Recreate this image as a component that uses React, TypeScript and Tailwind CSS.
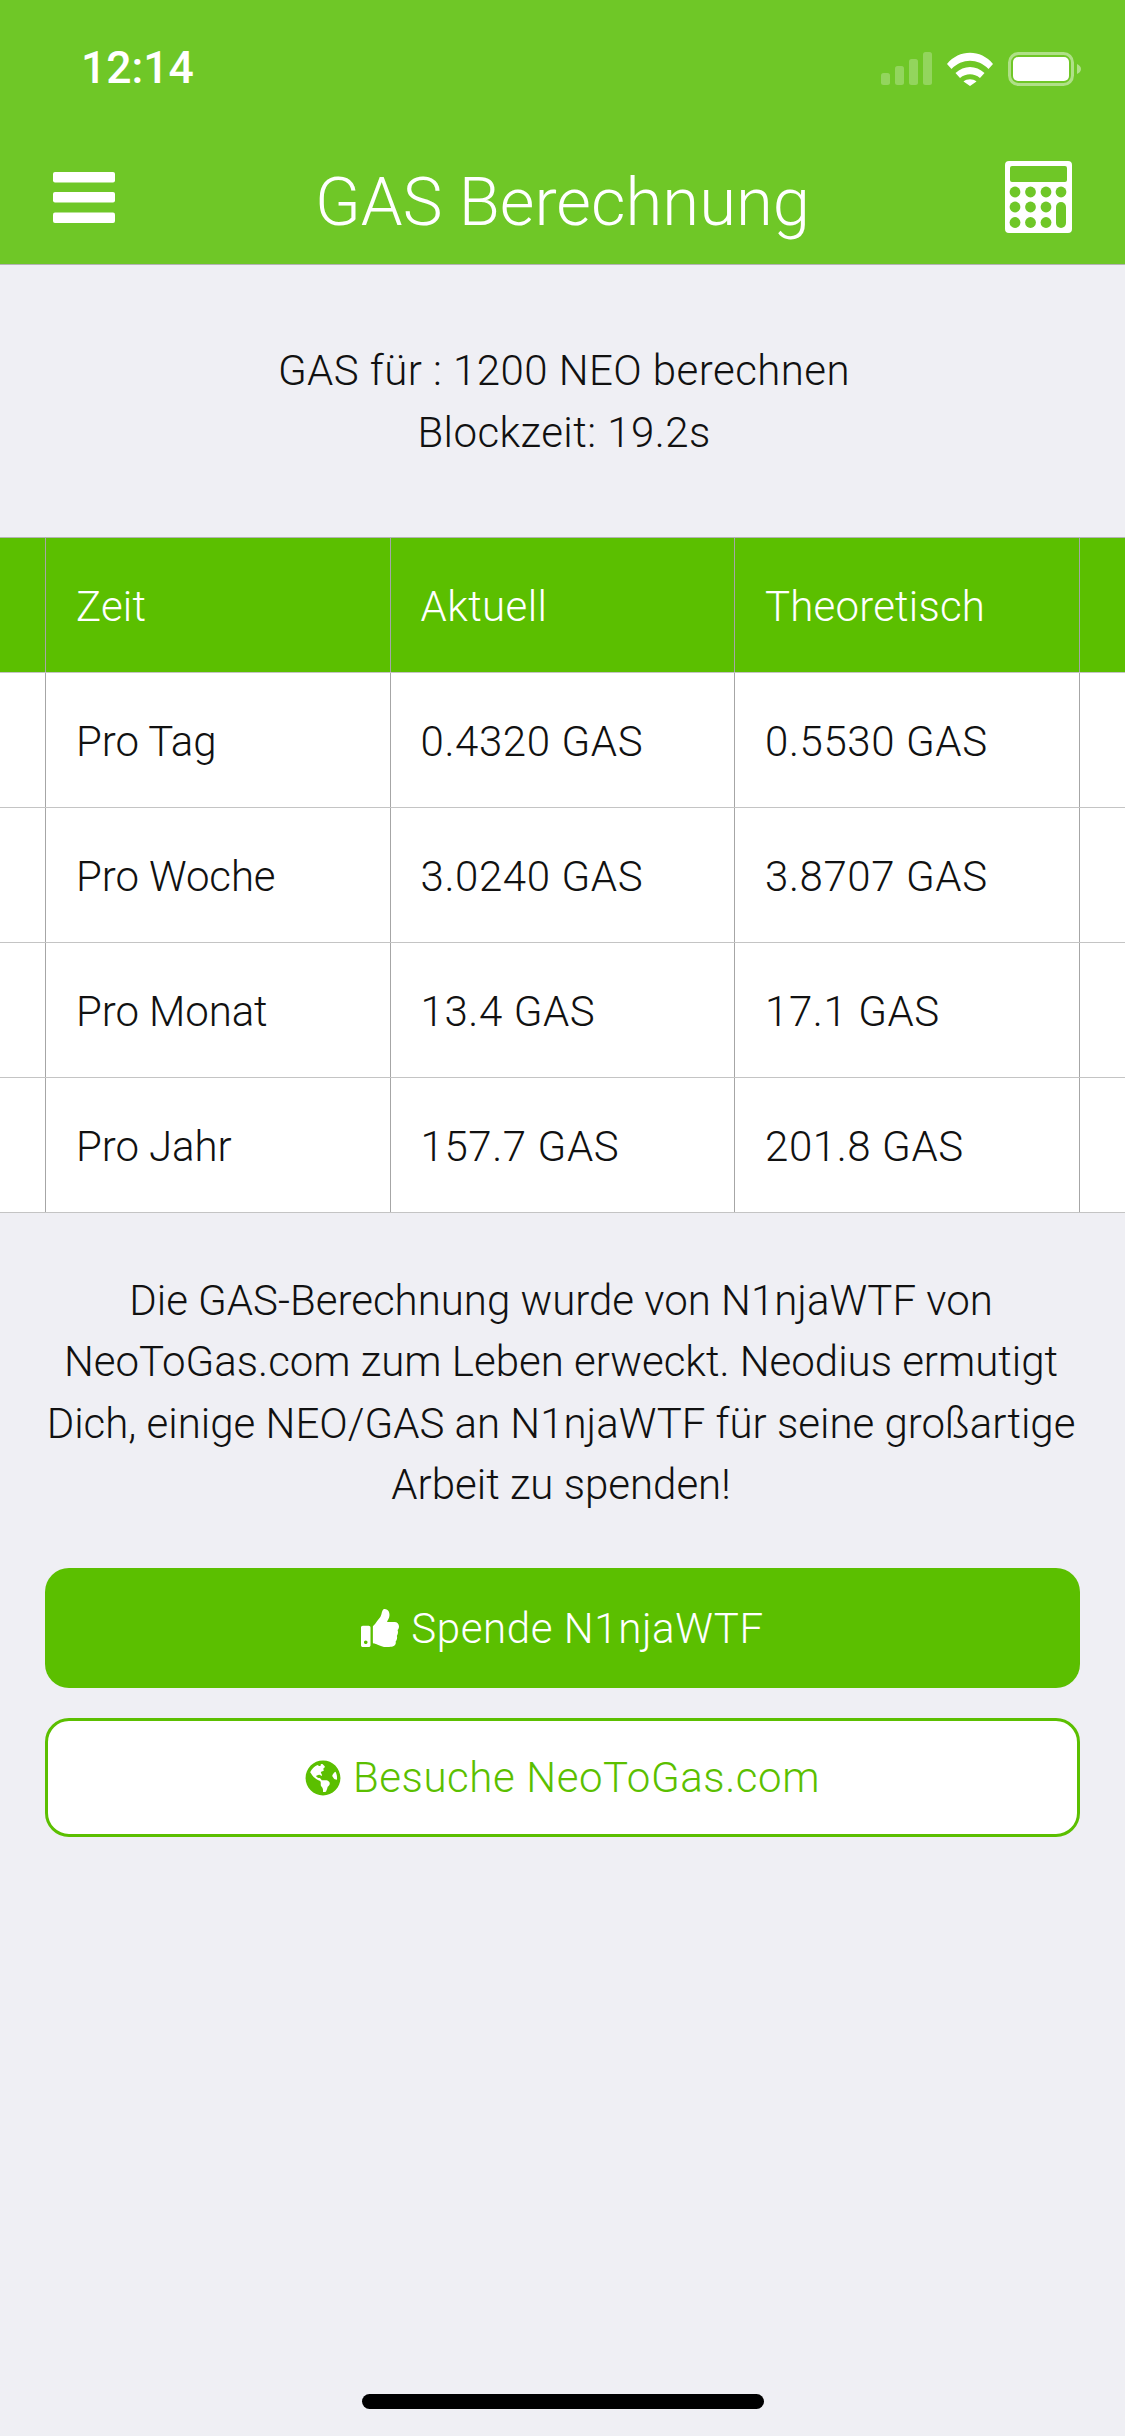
import { FaGlobeAmericas, FaThumbsUp } from "react-icons/fa";

const rows = [
  { zeit: "Pro Tag", aktuell: "0.4320 GAS", theoretisch: "0.5530 GAS" },
  { zeit: "Pro Woche", aktuell: "3.0240 GAS", theoretisch: "3.8707 GAS" },
  { zeit: "Pro Monat", aktuell: "13.4 GAS", theoretisch: "17.1 GAS" },
  { zeit: "Pro Jahr", aktuell: "157.7 GAS", theoretisch: "201.8 GAS" },
];

function StatusIcons() {
  return (
    <svg width="200" height="36" viewBox="0 0 200 36" fill="none" className="block">
      <g fill="#fff" fillOpacity="0.25">
        <rect x="0" y="21" width="9" height="12" rx="2.5" />
        <rect x="14" y="14" width="9" height="19" rx="2.5" />
        <rect x="28" y="7" width="9" height="26" rx="2.5" />
        <rect x="42" y="0" width="9" height="33" rx="2.5" />
      </g>
      <path
        fill="#fff"
        d="M66 12C78-3 100-3 112 12l-4.500 5C97 6 81 6 70.500 17ZM74.500 21c8.500-8 20.500-8 29 0L99 26c-6-5-14-5-20 0ZM82.500 29.500c3.500-3 9.500-3 13 0L89 34Z"
      />
      <rect x="128.500" y="1.500" width="63" height="31" rx="9" stroke="#fff" strokeOpacity="0.45" strokeWidth="3" />
      <rect x="132" y="5" width="56" height="24" rx="5" fill="#fff" />
      <path d="M196 12c2.500 1 4 3 4 5s-1.500 4-4 5Z" fill="#fff" fillOpacity="0.45" />
    </svg>
  );
}

function Hamburger() {
  return (
    <svg width="62" height="51" viewBox="0 0 62 51" fill="#fff" className="block">
      <rect x="0" y="0" width="62" height="10.500" rx="2" />
      <rect x="0" y="20" width="62" height="10.500" rx="2" />
      <rect x="0" y="40.500" width="62" height="10.500" rx="2" />
    </svg>
  );
}

function CalculatorIcon() {
  const dots = [
    [10, 31], [25.500, 31], [41, 31], [56, 31],
    [10, 46], [25.500, 46], [41, 46],
    [10, 61.500], [25.500, 61.500], [41, 61.500],
  ];
  return (
    <svg width="67" height="72" viewBox="0 0 67 72" className="block">
      <path
        fillRule="evenodd"
        fill="#fff"
        d="M4 0h59a4 4 0 0 1 4 4v64a4 4 0 0 1-4 4H4a4 4 0 0 1-4-4V4a4 4 0 0 1 4-4Zm3 5a2 2 0 0 0-2 2v12a2 2 0 0 0 2 2h53a2 2 0 0 0 2-2V7a2 2 0 0 0-2-2Z"
      />
      {dots.map(([cx, cy]) => (
        <circle key={`${cx}-${cy}`} cx={cx} cy={cy} r="5.400" fill="#6fc727" />
      ))}
      <rect x="51" y="41" width="10" height="26" rx="5" fill="#6fc727" />
    </svg>
  );
}

function Cell({ children, className }: { children: React.ReactNode; className: string }) {
  return (
    <div className={`flex w-[344.5px] shrink-0 items-center border-l border-[#a6a6a6] pl-[30px] pt-[2px] ${className}`}>
      {children}
    </div>
  );
}

function HeadRow() {
  return (
    <div className="flex h-[135px] border-b border-[#c4c4c4] bg-[#5bbf00] text-white">
      <div className="w-[45px] shrink-0" />
      <Cell className="tracking-[0.2px]">Zeit</Cell>
      <Cell className="tracking-[0.4px]">Aktuell</Cell>
      <Cell className="tracking-[0.2px]">Theoretisch</Cell>
      <div className="flex-1 border-l border-[#a6a6a6]" />
    </div>
  );
}

function DataRow({ zeit, aktuell, theoretisch }: { zeit: string; aktuell: string; theoretisch: string }) {
  return (
    <div className="flex h-[135px] border-b border-[#c4c4c4] bg-white text-[#111]">
      <div className="w-[45px] shrink-0" />
      <Cell className="tracking-[-0.1px]">{zeit}</Cell>
      <Cell className="tracking-[0.6px]">{aktuell}</Cell>
      <Cell className="tracking-[0.6px]">{theoretisch}</Cell>
      <div className="flex-1 border-l border-[#a6a6a6]" />
    </div>
  );
}

export default function App() {
  return (
    <div className="relative min-h-[2436px] w-[1125px] bg-[#efeff4] text-[42px] font-light text-[#111] [font-family:Roboto,'Liberation_Sans',sans-serif]">
      <header className="h-[265px] border-b border-[#b4b4b4] bg-[#6fc727] text-white">
        <div className="flex h-[161px] items-start justify-between pl-[81px] pr-[44px] pt-[44px]">
          <span className="text-[44.5px] font-medium leading-[48px]">12:14</span>
          <div className="pt-[8px]">
            <StatusIcons />
          </div>
        </div>
        <div className="flex h-[72px] items-center justify-between px-[53px]">
          <Hamburger />
          <h1 className="ml-[5px] mt-[10px] text-[67px] font-light leading-[72px]">GAS Berechnung</h1>
          <CalculatorIcon />
        </div>
      </header>

      <div className="pb-[73px] pl-[3px] pt-[75px] text-center leading-[62px] tracking-[0.45px]">
        <p>GAS für : 1200 NEO berechnen</p>
        <p>Blockzeit: 19.2s</p>
      </div>

      <div className="border-t border-[#b4b4b4]">
        <HeadRow />
        {rows.map((r) => (
          <DataRow key={r.zeit} {...r} />
        ))}
      </div>

      <p className="pr-[3px] pt-[57px] text-center leading-[61.3px]">
        Die GAS-Berechnung wurde von N1njaWTF von
        <br />
        NeoToGas.com zum Leben erweckt. Neodius ermutigt
        <br />
        Dich, einige NEO/GAS an N1njaWTF für seine großartige
        <br />
        Arbeit zu spenden!
      </p>

      <div className="flex flex-col gap-[30px] px-[45px] pt-[53px] tracking-[0.6px]">
        <button className="flex h-[120px] items-center justify-center gap-[12px] rounded-[24px] bg-[#5bbf00] text-white">
          <FaThumbsUp className="h-[38px] w-[38px]" />
          Spende N1njaWTF
        </button>
        <button className="flex h-[119px] items-center justify-center gap-[12px] rounded-[24px] border-[3px] border-[#5bbf00] bg-white text-[#5bbf00]">
          <FaGlobeAmericas className="h-[36px] w-[36px]" />
          Besuche NeoToGas.com
        </button>
      </div>

      <div className="absolute bottom-[27px] left-[362px] h-[15px] w-[402px] rounded-full bg-black" />
    </div>
  );
}
